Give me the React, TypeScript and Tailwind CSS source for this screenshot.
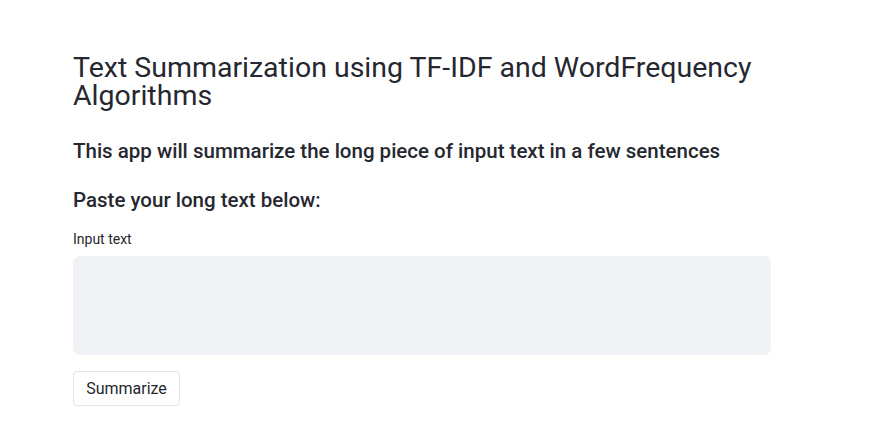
export default function App() {
  return (
    <div className="min-h-screen bg-white text-[#262730]" style={{ fontFamily: 'Roboto, "Noto Sans", sans-serif' }}>
      <main className="ml-[73px] w-[698px] pt-[54px] flex flex-col">
        <h1 className="text-[28.5px] leading-[28px] font-normal">
          Text Summarization using TF-IDF and WordFrequency Algorithms
        </h1>
        <h3 className="mt-[26px] text-[20.5px] leading-[30px] font-medium">
          This app will summarize the long piece of input text in a few sentences
        </h3>
        <h3 className="mt-[19px] text-[20.5px] leading-[30px] font-medium">Paste your long text below:</h3>
        <label className="mt-[14px] text-[14px] leading-[20px]">Input text</label>
        <textarea className="mt-[7px] h-[99px] w-full resize-none rounded-[7px] bg-[#f0f2f6] outline-none" />
        <div className="mt-[16px]">
          <button className="h-[35px] w-[107px] rounded-[4px] border border-[#e3e4e8] bg-white text-[16px]">
            Summarize
          </button>
        </div>
      </main>
    </div>
  );
}
